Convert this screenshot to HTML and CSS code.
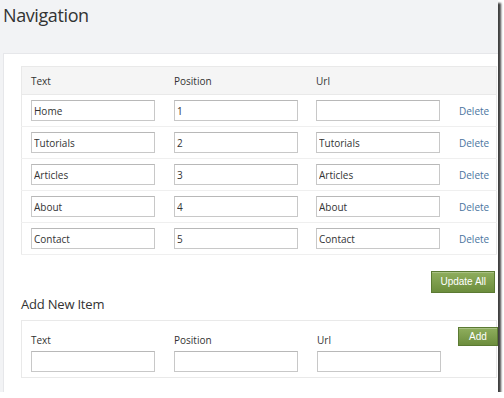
FILE: index.html
```html
<!DOCTYPE html>
<html lang="en">
<head>
<meta charset="UTF-8">
<title>Navigation</title>
<link rel="stylesheet" href="styles.css">
</head>
<body>
<div class="frame">
  <h1 class="title">Navigation</h1>
  <div class="panel">
    <table class="nav-table">
      <tr class="head">
        <th>Text</th>
        <th>Position</th>
        <th>Url</th>
        <th></th>
      </tr>
      <tr>
        <td><input type="text" value="Home"></td>
        <td><input type="text" value="1"></td>
        <td><input type="text" value=""></td>
        <td><a href="#" class="delete">Delete</a></td>
      </tr>
      <tr>
        <td><input type="text" value="Tutorials"></td>
        <td><input type="text" value="2"></td>
        <td><input type="text" value="Tutorials"></td>
        <td><a href="#" class="delete">Delete</a></td>
      </tr>
      <tr>
        <td><input type="text" value="Articles"></td>
        <td><input type="text" value="3"></td>
        <td><input type="text" value="Articles"></td>
        <td><a href="#" class="delete">Delete</a></td>
      </tr>
      <tr>
        <td><input type="text" value="About"></td>
        <td><input type="text" value="4"></td>
        <td><input type="text" value="About"></td>
        <td><a href="#" class="delete">Delete</a></td>
      </tr>
      <tr>
        <td><input type="text" value="Contact"></td>
        <td><input type="text" value="5"></td>
        <td><input type="text" value="Contact"></td>
        <td><a href="#" class="delete">Delete</a></td>
      </tr>
    </table>
    <div class="actions">
      <button class="btn">Update All</button>
    </div>
    <h2 class="sub">Add New Item</h2>
    <div class="add-box">
      <div class="field">
        <label>Text</label>
        <input type="text">
      </div>
      <div class="field">
        <label>Position</label>
        <input type="text">
      </div>
      <div class="field">
        <label>Url</label>
        <input type="text">
      </div>
      <button class="btn btn-add">Add</button>
    </div>
  </div>
</div>
</body>
</html>
```

FILE: styles.css
```css
body {
  margin: 0;
  padding: 0;
  background-color: #fff;
  font-family: "Open Sans", "Noto Sans", sans-serif;
  color: #333;
}
.frame {
  width: 498px;
  height: 392px;
  background-color: #f2f3f5;
  box-shadow: 3px 3px 2px rgba(0, 0, 0, 0.75);
  overflow: hidden;
}
.title {
  margin: 0;
  padding: 2px 0 0 3px;
  height: 53px;
  box-sizing: border-box;
  font-size: 18px;
  line-height: 26px;
  letter-spacing: -0.4px;
  font-weight: normal;
  color: #333;
}
.panel {
  margin-left: 3px;
  height: 339px;
  background-color: #fff;
  border-top: 1px solid #e6e7ea;
  border-left: 1px solid #e6e7ea;
  padding: 12px 0 0 17px;
  box-sizing: border-box;
}
.nav-table {
  width: 476px;
  table-layout: fixed;
  border-collapse: collapse;
  border: 1px solid #e9e9e9;
  font-size: 10px;
}
.nav-table th {
  background-color: #f5f5f5;
  font-weight: normal;
  text-align: left;
  height: 27px;
  padding: 0 0 0 9px;
  border-bottom: 1px solid #e9e9e9;
}
.nav-table th:nth-child(1) { width: 134px; }
.nav-table th:nth-child(2) { width: 133px; }
.nav-table th:nth-child(3) { width: 134px; }
.nav-table td {
  height: 31px;
  padding: 0 0 0 9px;
  border-bottom: 1px solid #efefef;
}
input[type="text"] {
  width: 124px;
  height: 21px;
  box-sizing: border-box;
  border: 1px solid #c8c8c8;
  border-top-color: #b8b8b8;
  padding: 0 2px;
  font-family: "Open Sans", "Noto Sans", sans-serif;
  font-size: 10px;
  color: #333;
  outline: none;
}
.delete {
  color: #4a74a0;
  text-decoration: none;
  font-size: 10px;
}
.actions {
  width: 474px;
  text-align: right;
  padding: 13px 0 0;
  height: 23px;
}
.btn {
  background: linear-gradient(#8fae5d, #6c8d3d);
  border: 1px solid #5b7a33;
  color: #fff;
  font-family: "Liberation Sans", Arial, sans-serif;
  font-size: 10px;
  height: 22px;
  padding: 0 8px;
  cursor: pointer;
  box-shadow: inset 0 1px 0 rgba(255, 255, 255, 0.25);
}
.sub {
  margin: 3px 0 0;
  font-size: 13px;
  letter-spacing: -0.2px;
  line-height: 20px;
  font-weight: normal;
  height: 26px;
}
.add-box {
  width: 476px;
  height: 58px;
  box-sizing: border-box;
  border: 1px solid #e9e9e9;
  display: flex;
  padding: 0 0 0 9px;
  font-size: 10px;
  position: relative;
}
.field {
  width: 143px;
  padding-top: 12px;
}
.field label {
  display: block;
  height: 18px;
}
.btn-add {
  position: absolute;
  right: -2px;
  top: 6px;
  height: 19px;
  width: 40px;
  padding: 0;
}
```
